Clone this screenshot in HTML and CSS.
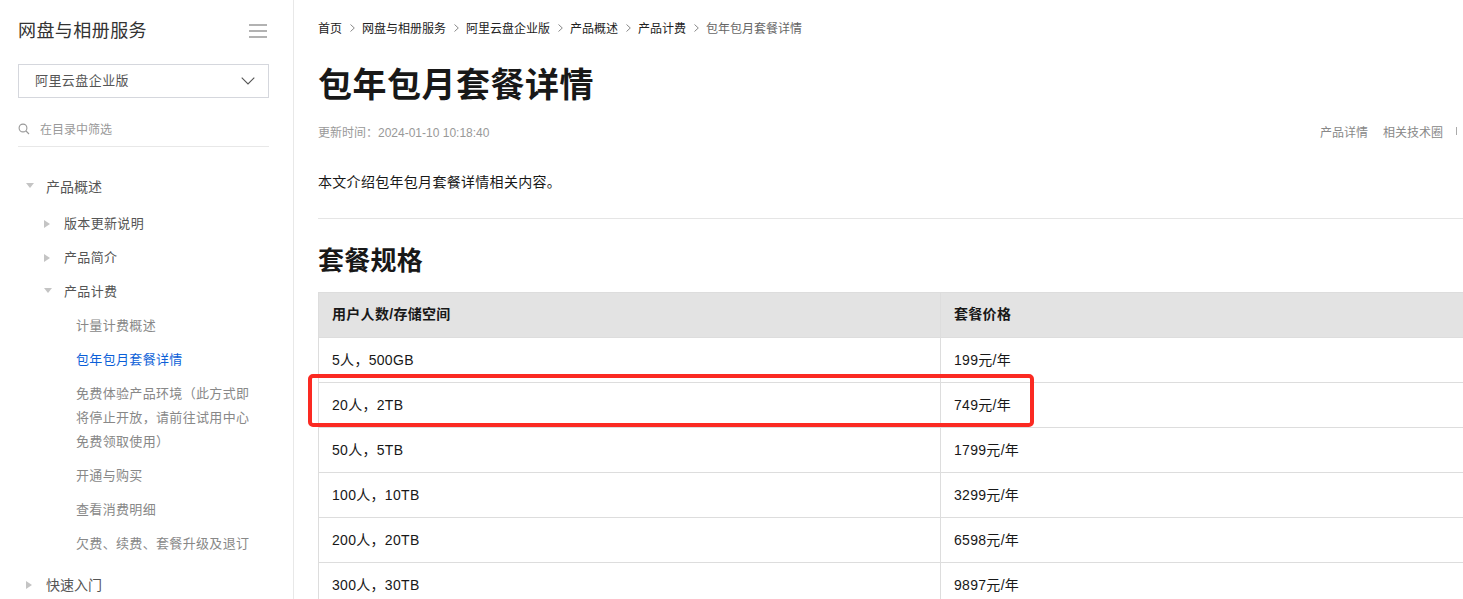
FILE: index.html
```html
<!DOCTYPE html>
<html lang="zh-CN">
<head>
<meta charset="utf-8">
<title>包年包月套餐详情</title>
<link rel="stylesheet" href="styles.css">
</head>
<body>
<div class="page">
  <aside class="sidebar">
    <div class="side-head">
      <span class="side-title">网盘与相册服务</span>
      <svg class="menu-icon" width="18" height="14" viewBox="0 0 18 14"><path d="M0 1h18M0 7h18M0 13h18" stroke="#999" stroke-width="1.5" fill="none"/></svg>
    </div>
    <div class="select">
      <span class="select-label">阿里云盘企业版</span>
      <svg width="14" height="8" viewBox="0 0 14 8"><path d="M.7.7 7 7 13.3.7" stroke="#555" stroke-width="1.1" fill="none"/></svg>
    </div>
    <div class="filter">
      <svg width="12" height="12" viewBox="0 0 12 12"><circle cx="5" cy="5" r="3.9" stroke="#999" stroke-width="1.1" fill="none"/><path d="M8 8l3 3" stroke="#999" stroke-width="1.1"/></svg>
      <span class="filter-label">在目录中筛选</span>
    </div>
    <nav class="tree">
      <div class="node lvl1 first"><i class="tri down"></i>产品概述</div>
      <div class="node lvl2"><i class="tri right"></i>版本更新说明</div>
      <div class="node lvl2"><i class="tri right"></i>产品简介</div>
      <div class="node lvl2"><i class="tri down"></i>产品计费</div>
      <div class="node lvl3">计量计费概述</div>
      <div class="node lvl3 active">包年包月套餐详情</div>
      <div class="node lvl3 multi">免费体验产品环境（此方式即将停止开放，请前往试用中心免费领取使用）</div>
      <div class="node lvl3">开通与购买</div>
      <div class="node lvl3">查看消费明细</div>
      <div class="node lvl3">欠费、续费、套餐升级及退订</div>
      <div class="node lvl1 next"><i class="tri right"></i>快速入门</div>
    </nav>
  </aside>
  <main class="content">
    <div class="crumbs">
      <a>首页</a><svg class="sep" width="5" height="8" viewBox="0 0 5 8"><path d="M.5.5 4.3 4 .5 7.5" stroke="#888" fill="none"/></svg>
      <a>网盘与相册服务</a><svg class="sep" width="5" height="8" viewBox="0 0 5 8"><path d="M.5.5 4.3 4 .5 7.5" stroke="#888" fill="none"/></svg>
      <a>阿里云盘企业版</a><svg class="sep" width="5" height="8" viewBox="0 0 5 8"><path d="M.5.5 4.3 4 .5 7.5" stroke="#888" fill="none"/></svg>
      <a>产品概述</a><svg class="sep" width="5" height="8" viewBox="0 0 5 8"><path d="M.5.5 4.3 4 .5 7.5" stroke="#888" fill="none"/></svg>
      <a>产品计费</a><svg class="sep" width="5" height="8" viewBox="0 0 5 8"><path d="M.5.5 4.3 4 .5 7.5" stroke="#888" fill="none"/></svg>
      <span class="current">包年包月套餐详情</span>
    </div>
    <h1>包年包月套餐详情</h1>
    <div class="meta">
      <span>更新时间：2024-01-10 10:18:40</span>
      <div class="meta-links"><span>产品详情</span><span>相关技术圈</span><i class="bar"></i></div>
    </div>
    <p class="intro">本文介绍包年包月套餐详情相关内容。</p>
    <hr class="rule">
    <h2>套餐规格</h2>
    <table class="plans">
      <thead>
        <tr><th>用户人数/存储空间</th><th>套餐价格</th></tr>
      </thead>
      <tbody>
        <tr><td>5人，500GB</td><td>199元/年</td></tr>
        <tr><td>20人，2TB</td><td>749元/年</td></tr>
        <tr><td>50人，5TB</td><td>1799元/年</td></tr>
        <tr><td>100人，10TB</td><td>3299元/年</td></tr>
        <tr><td>200人，20TB</td><td>6598元/年</td></tr>
        <tr><td>300人，30TB</td><td>9897元/年</td></tr>
      </tbody>
    </table>
  </main>
</div>
<div class="highlight"></div>
</body>
</html>
```
FILE: styles.css
```css
* { box-sizing: border-box; }
html, body { margin: 0; height: 100%; overflow: hidden; background: #fff; }
body { font-family: "Liberation Sans", "Noto Sans CJK SC", sans-serif; color: #181818; position: relative; }
.page { display: flex; height: 599px; overflow: hidden; }

.sidebar { flex: 0 0 294px; border-right: 1px solid #e8e8e8; padding: 0 24px 0 18px; }
.side-head { display: flex; justify-content: space-between; align-items: center; height: 60px; padding-right: 2px; }
.side-title { font-size: 18px; letter-spacing: .43px; color: #333; margin-top: -2px; }
.menu-icon { display: block; margin-top: 2px; }
.select { display: flex; justify-content: space-between; align-items: center; height: 34px; margin-top: 4px; border: 1px solid #d5d7dd; padding: 0 13px 0 16px; font-size: 13px; letter-spacing: .43px; color: #555; }
.select-label { margin-top: -3px; }
.filter { display: flex; align-items: center; gap: 10px; height: 49px; padding-top: 14px; font-size: 12px; color: #999; border-bottom: 1px solid #e8e8e8; }
.filter svg { display: block; }
.filter-label { margin-top: -2px; }

.tree { padding-top: 23px; }
.node { position: relative; font-size: 13px; letter-spacing: .33px; line-height: 34px; height: 34px; color: #555; }
.lvl1 { padding-left: 28px; font-size: 14px; letter-spacing: 0; }
.lvl1.first { margin-bottom: 3px; }
.lvl1.next { margin-top: 7px; }
.lvl2 { padding-left: 46px; }
.lvl3 { padding-left: 58px; padding-right: 14px; color: #888; }
.lvl3.multi { height: auto; line-height: 24px; padding-top: 5px; padding-bottom: 5px; }
.active { color: #0b5fd8; }
.tri { position: absolute; display: block; width: 0; height: 0; }
.tri.down { border-left: 4px solid transparent; border-right: 4px solid transparent; border-top: 5px solid #c4c4c4; top: 13px; }
.tri.right { border-top: 4px solid transparent; border-bottom: 4px solid transparent; border-left: 6px solid #c4c4c4; top: 13px; }
.lvl1 .tri { left: 8px; }
.lvl2 .tri { left: 26px; }

.content { flex: 1 1 auto; min-width: 0; padding: 0 0 0 24px; }
.crumbs { display: flex; align-items: center; height: 16px; margin-top: 19px; font-size: 12px; color: #222; white-space: nowrap; }
.sep { margin: 2px 7.5px 0; }
.current { color: #666; }
h1 { margin: 0; padding-top: 26px; font-size: 34px; letter-spacing: .5px; line-height: 48px; font-weight: 700; color: #181818; }
.meta { display: flex; justify-content: space-between; align-items: center; margin-top: 14px; height: 16px; font-size: 12px; color: #999; }
.meta-links { display: flex; align-items: center; gap: 13px; padding-right: 6px; color: #888; }
.meta-links span:first-child { margin-right: 2px; }
.bar { display: block; width: 1px; height: 8px; background: #aaa; }
.intro { margin: 0; padding-top: 33px; font-size: 14px; letter-spacing: .3px; line-height: 20px; color: #181818; }
.rule { margin: 26px 0 0; border: 0; border-top: 1px solid #e5e5e5; }
h2 { margin: 0; padding-top: 22px; font-size: 26px; letter-spacing: .25px; line-height: 40px; font-weight: 700; color: #181818; }
.plans { width: 1240px; margin-top: 11px; border-collapse: collapse; table-layout: fixed; font-size: 14px; letter-spacing: .3px; }
.plans th, .plans td { height: 45px; border: 1px solid #ddd; padding: 0 13px 2px; text-align: left; vertical-align: middle; color: #181818; }
.plans th { background: #e3e3e3; font-weight: 700; font-size: 14px; padding-bottom: 5px; }
.plans th:first-child { width: 622px; }
.highlight { position: absolute; left: 308px; top: 374px; width: 726px; height: 53px; border: 4px solid #fb2a22; border-radius: 5px; }
```
